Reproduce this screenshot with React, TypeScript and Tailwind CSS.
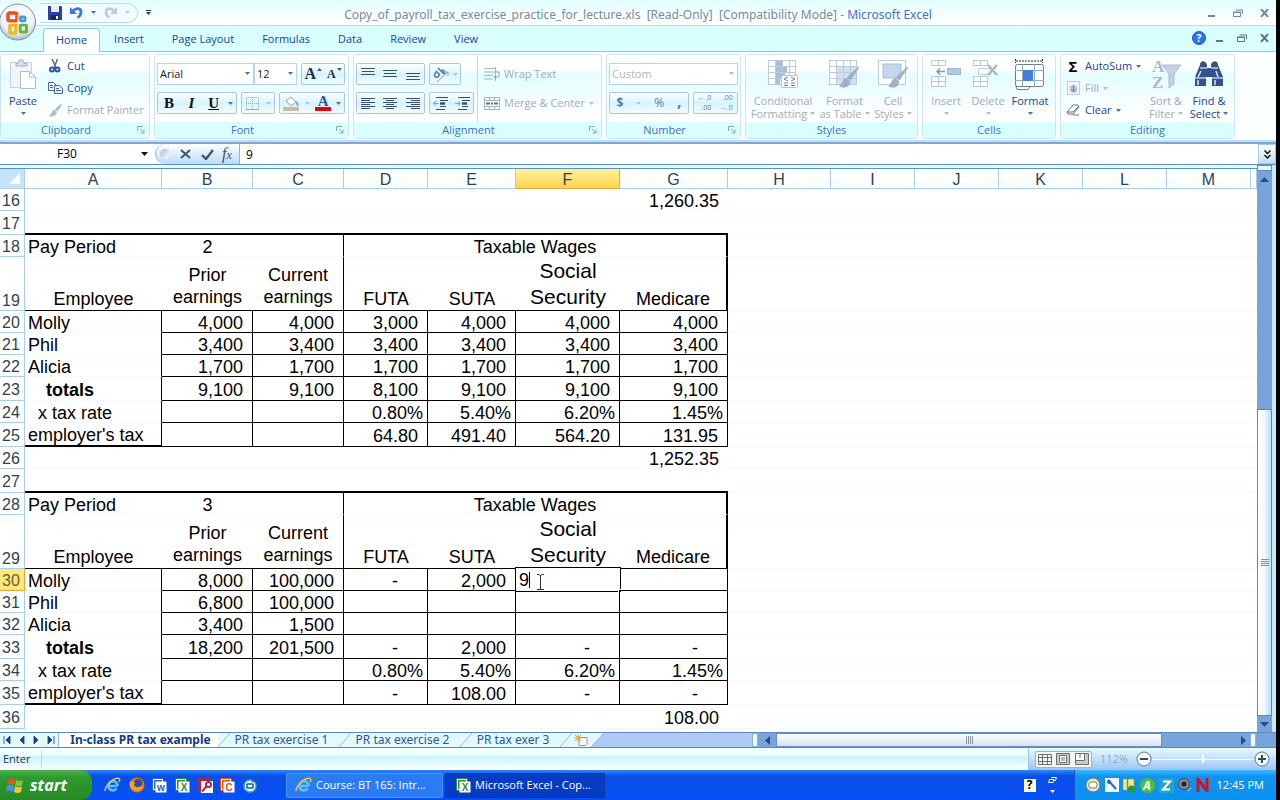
import React from 'react';
import clsx from 'clsx';

type IconProps = { className?: string };

function Caret({ className = 'text-[#4a6fa5]' }: IconProps) {
  return (
    <svg width="5" height="3" viewBox="0 0 5 3" className={clsx('shrink-0', className)}>
      <path d="M0 0h5L2.5 3z" fill="currentColor" />
    </svg>
  );
}

function Launcher() {
  return (
    <svg width="8" height="8" viewBox="0 0 8 8" fill="none" stroke="#8aa5c8">
      <path d="M.5 5V.5H6M3 3l3.500 3.500M7 3.500V7H3.500" />
    </svg>
  );
}

/* ---------- Title bar ---------- */

function OfficeLogo() {
  return (
    <svg width="38" height="40" viewBox="0 0 38 40">
      <defs>
        <radialGradient id="orb" cx="50%" cy="35%" r="65%">
          <stop offset="0" stopColor="#ffffff" />
          <stop offset="0.7" stopColor="#eef3fa" />
          <stop offset="1" stopColor="#a9b8cc" />
        </radialGradient>
      </defs>
      <circle cx="17.5" cy="20" r="18" fill="url(#orb)" stroke="#7f8fa8" />
      <g fill="none">
        <rect x="8" y="11" width="9" height="8" rx="2" stroke="#e8501d" strokeWidth="3.600" />
        <rect x="20.500" y="15" width="4.500" height="4" rx="1" stroke="#3d9be0" strokeWidth="2.800" />
        <rect x="10" y="23" width="6" height="8" rx="1" stroke="#f6b819" strokeWidth="3.600" />
        <rect x="20" y="23" width="6.500" height="7" rx="1.500" stroke="#6cb33e" strokeWidth="3.200" />
      </g>
      <path d="M18 12v20M8 21h20" stroke="#fff" strokeWidth=".8" />
    </svg>
  );
}

function SaveIcon() {
  return (
    <svg width="14" height="14" viewBox="0 0 14 14">
      <path d="M0 0h13l1 1v13H0z" fill="#2f3fa0" />
      <rect x="3" y="0" width="8" height="6" fill="#e6efff" />
      <rect x="3" y="9" width="8" height="5" fill="#1b2560" />
      <rect x="8" y="10" width="2" height="3" fill="#fff" />
    </svg>
  );
}

function UndoIcon({ flip }: { flip?: boolean }) {
  return (
    <svg width="13" height="13" viewBox="0 0 13 13" fill="none" className={flip ? '-scale-x-100' : ''}>
      <path d="M3 5C6 1.500 11 2 11 6c0 2.500-1.500 4.500-3.500 5.500" stroke={flip ? '#b9cde4' : '#3b78d8'} strokeWidth="2.800" />
      <path d="M0 1v7h7z" fill={flip ? '#b9cde4' : '#3b78d8'} />
    </svg>
  );
}

function WindowControls({ className }: { className: string }) {
  return (
    <div className={clsx('flex items-center', className)}>
      <button aria-label="Minimize" className="flex h-4 w-3 items-center justify-center">
        <svg width="8" height="8" viewBox="0 0 8 8"><path d="M0 7h7" stroke="currentColor" strokeWidth="2" /></svg>
      </button>
      <button aria-label="Restore" className="flex h-4 w-3 items-center justify-center">
        <svg width="10" height="8" viewBox="0 0 10 8" fill="none" stroke="currentColor">
          <path d="M2.500 1h7v4M.5 3.500h7v4h-7zM0 3h8" />
        </svg>
      </button>
      <button aria-label="Close" className="flex h-4 w-3 items-center justify-center">
        <svg width="9" height="8" viewBox="0 0 9 8"><path d="M1 0l7 8M8 0L1 8" stroke="currentColor" strokeWidth="2" /></svg>
      </button>
    </div>
  );
}

function TitleBar() {
  return (
    <header className="flex h-[26px] items-center border-b border-[#b9def0] bg-linear-to-b from-[#e0ffff] via-[#f4feff] to-white">
      <div className="flex h-6 w-40 items-center pl-10">
        <div className="flex h-5 w-[98px] items-center rounded-r-full border border-l-0 border-[#b8dcf0] bg-[#f2fdff] pl-2">
          <button aria-label="Save"><SaveIcon /></button>
          <button aria-label="Undo" className="ml-2 flex items-center gap-2">
            <UndoIcon />
            <Caret />
          </button>
          <button aria-label="Redo" className="ml-2 flex items-center gap-2">
            <UndoIcon flip />
            <Caret className="text-[#b9cde4]" />
          </button>
        </div>
        <button aria-label="Customize" className="ml-2 flex flex-col items-center gap-px">
          <span className="h-px w-[5px] bg-[#1f3a7a]" />
          <Caret className="text-[#1f3a7a]" />
        </button>
      </div>
      <h1 className="flex-1 pt-1 text-center font-['Noto_Sans',sans-serif] text-[12px] leading-5 whitespace-pre text-[#7a8aa0]">
        Copy_of_payroll_tax_exercise_practice_for_lecture.xls  [Read-Only]  [Compatibility Mode] -{' '}
        <span className="text-[#3c6fd0]">Microsoft Excel</span>
      </h1>
      <div className="flex w-40 justify-end pr-1.5">
        <WindowControls className="gap-3.5 text-[#6d88a8]" />
      </div>
    </header>
  );
}

const menuTabs = ['Insert', 'Page Layout', 'Formulas', 'Data', 'Review', 'View'];

function MenuTabs() {
  return (
    <nav className="flex h-[26px] items-end border-b border-[#9cc0e8] bg-[#d9ffff] pl-[43px] text-[11px] text-[#17439b]">
      <button className="-mb-px h-6 rounded-t-sm border border-b-0 border-[#9cc0e8] bg-linear-to-b from-[#f4ffff] to-white px-3">Home</button>
      {menuTabs.map((t) => (
        <button key={t} className="h-[23px] px-3.5">{t}</button>
      ))}
      <div className="ml-auto flex h-[26px] items-center gap-2 pr-1.5">
        <button aria-label="Help" className="flex size-[14px] items-center justify-center rounded-full border border-[#1a56c4] bg-[#2c72e8] text-[10px] font-bold text-white">?</button>
        <WindowControls className="gap-2.5 text-[#5f7288]" />
      </div>
    </nav>
  );
}

/* ---------- Ribbon ---------- */

function Group({ label, launcher, className, children }: { label: string; launcher?: boolean; className: string; children: React.ReactNode }) {
  return (
    <section className={clsx('flex h-[85px] shrink-0 flex-col overflow-hidden rounded-[3px] border border-[#c9e6f5] bg-linear-to-b from-white from-15% via-[#e4fdff] via-25% to-white to-75%', className)}>
      <div className="flex flex-1 px-0.5">{children}</div>
      <div className={clsx('relative flex h-4 items-center justify-center bg-[#d9ffff] text-[11px] text-[#3f6fc6]', launcher && 'pr-[18px]')}>
        {label}
        {launcher && (
          <button aria-label={label + ' options'} className="absolute right-1 bottom-1"><Launcher /></button>
        )}
      </div>
    </section>
  );
}

function SmallButton({ icon, label, disabled, caret }: { icon: React.ReactNode; label: string; disabled?: boolean; caret?: boolean }) {
  return (
    <button disabled={disabled} className={clsx('flex h-[22px] items-center gap-1 whitespace-nowrap', disabled ? 'text-[#a3abb3]' : 'text-[#17439b]')}>
      <span className="flex size-4 items-center justify-center">{icon}</span>
      {label}
      {caret && <Caret className={disabled ? 'text-[#b4bcc4]' : 'text-[#4a6fa5]'} />}
    </button>
  );
}

function BigButton({ icon, lines, disabled, className }: { icon: React.ReactNode; lines: string[]; disabled?: boolean; className: string }) {
  const caret = <Caret className={disabled ? 'text-[#b4bcc4]' : 'text-[#4a6fa5]'} />;
  return (
    <button disabled={disabled} className={clsx('flex flex-col items-center pt-[3px] leading-[13px] whitespace-nowrap', disabled ? 'text-[#a3abb3]' : 'text-[#17439b]', className)}>
      <span className="mb-1 flex h-8 items-center justify-center">{icon}</span>
      <span>{lines[0]}</span>
      <span className="flex h-[13px] items-center gap-[3px]">
        {lines[1]}
        {caret}
      </span>
    </button>
  );
}

function ButtonBox({ className, children }: { className?: string; children: React.ReactNode }) {
  return (
    <div className={clsx('flex h-[22px] items-center justify-around rounded-[2px] border border-[#a9c6e8] bg-linear-to-b from-white via-[#d8f4ff] to-[#f0fdff]', className)}>
      {children}
    </div>
  );
}

function Combo({ label, value, className, disabled }: { label: string; value: string; className: string; disabled?: boolean }) {
  return (
    <div className={clsx('relative h-[22px]', className)}>
      <select aria-label={label} disabled={disabled} className={clsx('h-full w-full appearance-none border border-[#b4d4ec] bg-white pl-0.5 opacity-100', disabled ? 'text-[#b9b6a4]' : 'text-[#222]')}>
        <option>{value}</option>
      </select>
      <span className="pointer-events-none absolute top-[9px] right-1 flex"><Caret className={disabled ? 'text-[#b4bcc4]' : 'text-[#4a6fa5]'} /></span>
    </div>
  );
}

function PasteIcon() {
  return (
    <svg width="28" height="31" viewBox="0 0 28 31" fill="none">
      <rect x="1.500" y="3.500" width="21" height="25" fill="#f0f5fa" stroke="#c3d3e2" />
      <path d="M7 4.500h2L10 1h4l1 3.500h3V7H7z" fill="#d7e1ec" stroke="#9fb2c8" />
      <path d="M11.500 12.500h9l6 5.500v11.500h-15z" fill="#fff" stroke="#a9bed4" />
      <path d="M20.500 12.500V18h6" stroke="#a9bed4" />
    </svg>
  );
}

function CutIcon() {
  return (
    <svg width="12" height="14" viewBox="0 0 12 14" fill="none">
      <path d="M3 0l4 9M8.500 0L5 9" stroke="#5d6f85" strokeWidth="1.600" />
      <circle cx="3" cy="10.500" r="2" stroke="#2555a8" strokeWidth="2" />
      <circle cx="8.500" cy="10.500" r="2" stroke="#2555a8" strokeWidth="2" />
    </svg>
  );
}

function CopyIcon() {
  return (
    <svg width="15" height="12" viewBox="0 0 15 12" stroke="#3f66ad">
      <path d="M.5.5h5l3 3v5h-8z" fill="#fff" />
      <path d="M6.500 3.500h5l3 3v5h-8z" fill="#eaf4ff" />
      <path d="M2 3.500h3M2 5.500h3M8 6.500h3M8 8.500h5" />
    </svg>
  );
}

function BrushIcon() {
  return (
    <svg width="13" height="13" viewBox="0 0 13 13">
      <path d="M12 0L6 5l2.500 2.500L13 1zM5.500 5.500C3 6 3 10 0 12c3 1.500 7 0 8-4z" fill="#a9bdd6" />
    </svg>
  );
}

function Lines({ widths, side = 'left' }: { widths: number[]; side?: 'left' | 'center' | 'right' }) {
  return (
    <svg width="14" height="12" viewBox="0 0 14 12">
      {widths.map((w, i) => (
        <rect key={i} x={side === 'right' ? 14 - w : side === 'center' ? (14 - w) / 2 : 0} y={i * 2 + 1} width={w} height="1" fill="#3a4f70" />
      ))}
    </svg>
  );
}

function VLines({ offset }: { offset: number }) {
  return (
    <svg width="14" height="14" viewBox="0 0 14 14" stroke="#3a4f70">
      {[0, 1, 2].map((i) => (
        <path key={i} d={`M${i === 1 ? 1 : 0} ${offset + i * 3 + 0.5}h${i === 1 ? 12 : 14}`} />
      ))}
    </svg>
  );
}

function IndentIcon({ right }: { right?: boolean }) {
  return (
    <svg width="15" height="13" viewBox="0 0 15 13" stroke="#3a4f70">
      <path d="M3 .5h12M7 3.500h8M7 9.500h6M3 12.500h9" />
      <path d="M7 6.500h5" strokeWidth="2.500" />
      <path d={right ? 'M0 6.500h5M3 4l2.500 2.500L3 9' : 'M5.500 6.500h-5M3 4L.5 6.500 3 9'} fill="none" stroke="#7ba0d0" />
    </svg>
  );
}

function GridIcon({ variant }: { variant: 'cond' | 'table' | 'cell' }) {
  return (
    <svg width="31" height="30" viewBox="0 0 31 30" fill="none">
      <rect x=".5" y="1.500" width="27" height="24" fill="#fff" stroke="#bccbdc" />
      {variant === 'cond' && <path d="M8 2h6v5H8zM8 7h11v6H8zM8 13h9v6H8zM8 19h4v6H8z" fill="#a9bedd" />}
      {variant === 'table' && <path d="M7 8h20v17H7z" fill="#d3e0f4" />}
      {variant === 'cell' && <path d="M5 5h18v14H5z" fill="#c4d6f0" stroke="#a9bdd8" />}
      {variant !== 'cell' && <path d="M0 7.500h28M0 13.500h28M0 19.500h28M7.500 1v25M14.500 1v25M21.500 1v25" stroke="#bccbdc" />}
      {variant === 'cond' ? (
        <>
          <rect x="13.500" y="16.500" width="16" height="12" rx="1" fill="#fff" stroke="#b3c2d4" />
          <path d="M20 18l-4 2 4 2M16 24h4M23 18l4 2-4 2M23 24h4M23 26.500h4M16 26.500h4" stroke="#6f8097" />
        </>
      ) : (
        <path d="M30 7L18 18l3 4 9-13zM18 19c-5 0-4 6-8 8 4 3 11 2 11-4z" fill="#9fb0c8" />
      )}
    </svg>
  );
}

function CellsIcon({ variant }: { variant: 'insert' | 'delete' }) {
  return (
    <svg width="31" height="30" viewBox="0 0 31 30" fill="none" stroke="#b9c8d8">
      <path d="M.5 1.500h14v5H.5zM.5 17.500h14v10H.5zM7.500 1.500v5M7.500 17.500v10M.5 22.500h14" fill="#fff" />
      {variant === 'insert' ? (
        <>
          <path d="M16.500 9.500h13v6h-13zM23 9.500v6" fill="#b5c9e6" stroke="#9fb4cf" />
          <path d="M14 12.500H6M9 9.500l-3 3 3 3" stroke="#8598b4" strokeWidth="1.500" />
        </>
      ) : (
        <>
          <path d="M5.500 9.500h12v6h-12z" strokeDasharray="1 1" stroke="#8fa3bd" />
          <path d="M15 6l9 10M24 6l-9 10" stroke="#aab9cc" strokeWidth="2.500" />
        </>
      )}
    </svg>
  );
}

function FormatIcon() {
  return (
    <svg width="32" height="31" viewBox="0 0 32 31" fill="none">
      <path d="M1.500 0v4M28.500 0v4M2 2h26" stroke="#222c44" strokeDasharray="2 1" />
      <rect x="1.500" y="5.500" width="28" height="22" rx="2" fill="#fff" stroke="#6b7c94" />
      <path d="M1 11.500h29M1 21.500h29M8.500 5v23M20.500 5v23" stroke="#9aa8bc" />
      <rect x="9" y="11" width="10" height="11" fill="#3f7fe0" />
      <path d="M2 27.500h14l-2 3H3z" fill="#fff" stroke="#6b7c94" />
    </svg>
  );
}

function SortIcon() {
  return (
    <svg width="31" height="31" viewBox="0 0 31 31" fontFamily="Liberation Serif, serif" fontSize="17" fill="#a9b8cc">
      <text x="1" y="13" fontWeight="bold">A</text>
      <text x="1" y="29" fontWeight="bold">Z</text>
      <path d="M11 6h19l-7 9v10l-5 4V15z" fill="#c3d2e6" stroke="#a9bbd2" />
    </svg>
  );
}

function BinocularsIcon() {
  return (
    <svg width="30" height="28" viewBox="0 0 30 28">
      <path d="M6 5c0-5 6-5 7 0v3h4V5c1-5 7-5 7 0l5 12v9H18v-9h-6v9H1v-9z" fill="#34538c" />
      <path d="M1 18h11M18 18h11M6 8h7M17 8h7" stroke="#b5cdee" strokeWidth="1.500" />
      <path d="M7 11l-3 6M22 11l2 6M4 20v5M21 20v5" stroke="#d8e6fa" strokeWidth="1.500" />
    </svg>
  );
}

function WrapIcon() {
  return (
    <svg width="16" height="15" viewBox="0 0 16 15" fill="none" stroke="#a9b4c0">
      <path d="M0 1.500h11M0 5h11M0 8.500h9M0 12h9M11.500 0v14" />
      <path d="M12 5h3v5h-5M12 8l-2 2 2 2" stroke="#8fa4bf" />
    </svg>
  );
}

function MergeIcon() {
  return (
    <svg width="16" height="13" viewBox="0 0 16 13" fill="none" stroke="#a9b4c0">
      <path d="M.5.5h15v12H.5zM.5 3.500h15M.5 9.500h15M5.500.5v3M10.500.5v3M5.500 9.500v3M10.500 9.500v3" />
      <path d="M2 6.500h4M10 6.500h4M7 6.500h2" stroke="#5f7088" strokeWidth="2" />
    </svg>
  );
}

function Ribbon() {
  return (
    <div className="flex h-[90px] gap-1 overflow-hidden border-b-2 border-[#c2dcf4] bg-[#fbffff] pt-0.5 text-[11px]">
      <Group label="Clipboard" launcher className="w-[150px]">
        <BigButton icon={<PasteIcon />} lines={['Paste', '']} className="w-10" />
        <div className="ml-1 flex flex-col">
          <SmallButton icon={<CutIcon />} label="Cut" />
          <SmallButton icon={<CopyIcon />} label="Copy" />
          <SmallButton icon={<BrushIcon />} label="Format Painter" disabled />
        </div>
      </Group>

      <Group label="Font" launcher className="w-[195px]">
        <div className="flex w-full flex-col gap-[7px] pt-2">
          <div className="flex">
            <Combo label="Font name" value="Arial" className="w-[97px]" />
            <Combo label="Font size" value="12" className="w-[43px]" />
            <ButtonBox className="ml-1 w-11 font-['Liberation_Serif',serif] font-bold text-[#1d2a44]">
              <button aria-label="Grow font" className="flex items-start gap-px text-[16px] leading-5">
                A
                <svg width="5" height="3" viewBox="0 0 5 3" className="mt-1"><path d="M0 3h5L2.500 0z" fill="#3a5c9c" /></svg>
              </button>
              <button aria-label="Shrink font" className="flex items-start gap-px text-[12px] leading-5">
                A
                <svg width="5" height="3" viewBox="0 0 5 3" className="mt-1"><path d="M0 0h5L2.500 3z" fill="#3a5c9c" /></svg>
              </button>
            </ButtonBox>
          </div>
          <div className="flex gap-1">
            <ButtonBox className="w-20 font-['Liberation_Serif',serif] text-[15px] font-bold text-[#111]">
              <button aria-label="Bold" className="w-4">B</button>
              <button aria-label="Italic" className="w-4 italic">I</button>
              <button aria-label="Underline" className="w-4 underline">U</button>
              <Caret />
            </ButtonBox>
            <ButtonBox className="w-[34px]">
              <button aria-label="Borders" className="flex">
                <svg width="13" height="13" viewBox="0 0 13 13" fill="none" stroke="#8fa8c8">
                  <path d="M.5.5h12v12H.5zM6.500 0v13M0 6.500h13" strokeDasharray="1 1" />
                  <path d="M0 12.500h13" />
                </svg>
              </button>
              <Caret className="text-[#b4c4d8]" />
            </ButtonBox>
            <ButtonBox className="w-[66px]">
              <button aria-label="Fill color" className="flex">
                <svg width="17" height="16" viewBox="0 0 17 16" fill="none">
                  <path d="M3 6l5-4 5 5-5 4z" fill="#fff" stroke="#8aa3c5" />
                  <path d="M13 7c2 1 2 3 1 4" stroke="#8aa3c5" strokeWidth="2" />
                  <rect x="0" y="12" width="16" height="4" fill="#c4bfa4" />
                </svg>
              </button>
              <Caret className="text-[#b4c4d8]" />
              <button aria-label="Font color" className="flex flex-col items-center font-['Liberation_Serif',serif] text-[15px] leading-3 font-bold text-[#2a56a8]">
                A<span className="h-1 w-4 bg-[#e3000f]" />
              </button>
              <Caret />
            </ButtonBox>
          </div>
        </div>
      </Group>

      <Group label="Alignment" launcher className="w-[249px]">
        <div className="flex w-[122px] flex-col gap-[7px] border-r border-[#c3d9ea] pt-2">
          <div className="flex gap-1">
            <ButtonBox className="w-[69px]">
              <button aria-label="Top align"><VLines offset={1} /></button>
              <button aria-label="Middle align"><VLines offset={3} /></button>
              <button aria-label="Bottom align"><VLines offset={6} /></button>
            </ButtonBox>
            <ButtonBox className="w-8">
              <button aria-label="Orientation">
                <svg width="18" height="18" viewBox="0 0 18 18" fill="none">
                  <path d="M2.500 9.500l2-3 3 3-1.500 2.500c-2 1-4-.5-3.500-2.500zM6 3l6 6M9 6c2-2 5 1 3 3" stroke="#5f7796" strokeWidth="1.500" />
                  <path d="M5 17L16 7M12.500 7H16v3.500" stroke="#8aa3c5" />
                </svg>
              </button>
              <Caret className="text-[#b4c4d8]" />
            </ButtonBox>
          </div>
          <div className="flex gap-1">
            <ButtonBox className="w-[69px]">
              <button aria-label="Align left"><Lines widths={[14, 9, 14, 9, 14, 9]} /></button>
              <button aria-label="Center"><Lines widths={[14, 8, 14, 8, 14, 8]} side="center" /></button>
              <button aria-label="Align right"><Lines widths={[14, 9, 14, 9, 14, 9]} side="right" /></button>
            </ButtonBox>
            <ButtonBox className="w-[45px]">
              <button aria-label="Decrease indent"><IndentIcon /></button>
              <button aria-label="Increase indent"><IndentIcon right /></button>
            </ButtonBox>
          </div>
        </div>
        <div className="flex flex-col gap-[7px] pt-2 pl-1.5">
          <SmallButton icon={<WrapIcon />} label="Wrap Text" disabled />
          <SmallButton icon={<MergeIcon />} label="Merge & Center" disabled caret />
        </div>
      </Group>

      <Group label="Number" launcher className="w-[135px]">
        <div className="flex w-full flex-col gap-[7px] pt-2">
          <Combo label="Number format" value="Custom" disabled className="w-full" />
          <div className="flex gap-1">
            <ButtonBox className="w-20 text-[12px] text-[#5c7ca8]">
              <button className="font-bold">$</button>
              <Caret className="text-[#b4c4d8]" />
              <button>%</button>
              <button className="pb-1 text-[16px] font-bold">,</button>
            </ButtonBox>
            <ButtonBox className="flex-1 text-[7px] leading-[10px] text-[#5c7ca8]">
              <button aria-label="Increase decimal" className="flex flex-col items-end">
                <span>←.0</span>
                <span>.00</span>
              </button>
              <button aria-label="Decrease decimal" className="flex flex-col items-end">
                <span>.00</span>
                <span>→.0</span>
              </button>
            </ButtonBox>
          </div>
        </div>
      </Group>

      <Group label="Styles" className="w-[173px]">
        <BigButton icon={<GridIcon variant="cond" />} lines={['Conditional', 'Formatting']} disabled className="w-[70px]" />
        <BigButton icon={<GridIcon variant="table" />} lines={['Format', 'as Table']} disabled className="w-[53px]" />
        <BigButton icon={<GridIcon variant="cell" />} lines={['Cell', 'Styles']} disabled className="w-[44px]" />
      </Group>

      <Group label="Cells" className="w-[134px]">
        <BigButton icon={<CellsIcon variant="insert" />} lines={['Insert', '']} disabled className="w-[42px]" />
        <BigButton icon={<CellsIcon variant="delete" />} lines={['Delete', '']} disabled className="w-[42px]" />
        <BigButton icon={<FormatIcon />} lines={['Format', '']} className="w-[42px]" />
      </Group>

      <Group label="Editing" className="w-[175px]">
        <div className="flex w-[82px] flex-col pl-0.5">
          <SmallButton icon={<span className="text-[15px] font-bold text-black">Σ</span>} label="AutoSum" caret />
          <SmallButton
            icon={
              <svg width="13" height="14" viewBox="0 0 13 14" fill="none">
                <rect x=".5" y=".5" width="12" height="13" fill="#f4f8fc" stroke="#c3ced9" />
                <circle cx="6.500" cy="8" r="4" fill="#b9c9dd" />
                <path d="M6.500 4v6M4 8l2.500 2.500L9 8" stroke="#74879f" />
              </svg>
            }
            label="Fill"
            disabled
            caret
          />
          <SmallButton
            icon={
              <svg width="14" height="12" viewBox="0 0 14 12">
                <path d="M1 8l6-7h5l1 2-6 7H2z" fill="#fff" stroke="#64748c" />
                <path d="M1 8h6l6-6M7 11h6" fill="none" stroke="#64748c" />
              </svg>
            }
            label="Clear"
            caret
          />
        </div>
        <BigButton icon={<SortIcon />} lines={['Sort &', 'Filter']} disabled className="w-[42px]" />
        <BigButton icon={<BinocularsIcon />} lines={['Find &', 'Select']} className="w-[44px]" />
      </Group>
    </div>
  );
}

/* ---------- Formula bar ---------- */

function FormulaBar() {
  return (
    <div className="border-t-2 border-b border-[#5d90c4] border-t-[#7ba7d6] bg-[#e6faff]">
      <div className="flex h-5 items-center bg-white text-[12px]">
        <div className="flex h-full w-[155px] items-center">
          <input aria-label="Name box" defaultValue="F30" className="w-[134px] bg-transparent text-center text-black outline-none" />
          <button aria-label="Names" className="flex w-5 justify-center">
            <svg width="7" height="4" viewBox="0 0 7 4"><path d="M0 0h7L3.500 4z" fill="#111" /></svg>
          </button>
        </div>
        <div className="flex h-full w-[85px] items-center rounded-l-full border-r border-l border-[#8fb2dc] bg-linear-to-b from-white to-[#b9dcfa] pl-1">
          <span className="size-2.5 rounded-full bg-linear-to-br from-[#a9bcd4] to-white" />
          <button aria-label="Cancel" className="ml-2.5">
            <svg width="11" height="10" viewBox="0 0 11 10"><path d="M1 1l9 8M10 1L1 9" stroke="#4a5463" strokeWidth="2" /></svg>
          </button>
          <button aria-label="Accept" className="ml-2.5">
            <svg width="13" height="11" viewBox="0 0 13 11" fill="none"><path d="M1 6l4 4 7-9" stroke="#4a5463" strokeWidth="2.400" /></svg>
          </button>
          <button aria-label="Insert function" className="ml-2 font-['Liberation_Serif',serif] text-[16px] leading-4 text-[#3c5070] italic">f<span className="text-[12px]">x</span></button>
        </div>
        <input aria-label="Formula" defaultValue="9" className="h-full min-w-0 flex-1 bg-transparent pl-1.5 text-black outline-none" />
        <button aria-label="Expand formula bar" className="flex h-full w-[18px] items-center justify-center border border-[#a9cbe8] bg-linear-to-b from-white to-[#bfe0f8]">
          <svg width="7" height="9" viewBox="0 0 7 9" fill="none" stroke="#111" strokeWidth="1.500"><path d="M.5.500l3 3 3-3M.5 5l3 3 3-3" /></svg>
        </button>
      </div>
    </div>
  );
}

/* ---------- Sheet ---------- */

type Kind = 'plain' | 'gap' | 'title' | 'head' | 'body' | 'last';
interface Row {
  n: number;
  kind: Kind;
  height: string;
  cells: string[];
}

const H22 = 'h-[22px]';
const H24 = 'h-6';
const heads = ['Employee', 'Prior\nearnings', 'Current\nearnings', 'FUTA', 'SUTA', 'Social\nSecurity', 'Medicare'];
const empty = ['', '', '', '', '', '', ''];

const rows: Row[] = [
  { n: 16, kind: 'plain', height: H22, cells: ['', '', '', '', '', '', '1,260.35'] },
  { n: 17, kind: 'gap', height: H24, cells: empty },
  { n: 18, kind: 'title', height: H22, cells: ['Pay Period', '2', '', 'Taxable Wages'] },
  { n: 19, kind: 'head', height: 'h-[54px]', cells: heads },
  { n: 20, kind: 'body', height: H22, cells: ['Molly', '4,000', '4,000', '3,000', '4,000', '4,000', '4,000'] },
  { n: 21, kind: 'body', height: H22, cells: ['Phil', '3,400', '3,400', '3,400', '3,400', '3,400', '3,400'] },
  { n: 22, kind: 'body', height: H22, cells: ['Alicia', '1,700', '1,700', '1,700', '1,700', '1,700', '1,700'] },
  { n: 23, kind: 'body', height: H24, cells: ['totals', '9,100', '9,100', '8,100', '9,100', '9,100', '9,100'] },
  { n: 24, kind: 'body', height: H22, cells: ['x tax rate', '', '', '0.80%', '5.40%', '6.20%', '1.45%'] },
  { n: 25, kind: 'last', height: H24, cells: ["employer's tax", '', '', '64.80', '491.40', '564.20', '131.95'] },
  { n: 26, kind: 'plain', height: H22, cells: ['', '', '', '', '', '', '1,252.35'] },
  { n: 27, kind: 'gap', height: H24, cells: empty },
  { n: 28, kind: 'title', height: H22, cells: ['Pay Period', '3', '', 'Taxable Wages'] },
  { n: 29, kind: 'head', height: 'h-[54px]', cells: heads },
  { n: 30, kind: 'body', height: H22, cells: ['Molly', '8,000', '100,000', '-', '2,000', 'edit', ''] },
  { n: 31, kind: 'body', height: H22, cells: ['Phil', '6,800', '100,000', '', '', '', ''] },
  { n: 32, kind: 'body', height: H22, cells: ['Alicia', '3,400', '1,500', '', '', '', ''] },
  { n: 33, kind: 'body', height: H24, cells: ['totals', '18,200', '201,500', '-', '2,000', '-', '-'] },
  { n: 34, kind: 'body', height: H22, cells: ['x tax rate', '', '', '0.80%', '5.40%', '6.20%', '1.45%'] },
  { n: 35, kind: 'last', height: H24, cells: ["employer's tax", '', '', '-', '108.00', '-', '-'] },
  { n: 36, kind: 'plain', height: H24, cells: ['', '', '', '', '', '', '108.00'] },
];

const columns = [
  { name: 'A', width: 'w-[137px]' },
  { name: 'B', width: 'w-[91px]' },
  { name: 'C', width: 'w-[91px]' },
  { name: 'D', width: 'w-[84px]' },
  { name: 'E', width: 'w-[88px]' },
  { name: 'F', width: 'w-[104px]' },
  { name: 'G', width: 'w-[108px]' },
  { name: 'H', width: 'w-[103px]' },
  { name: 'I', width: 'w-[84px]' },
  { name: 'J', width: 'w-[84px]' },
  { name: 'K', width: 'w-[84px]' },
  { name: 'L', width: 'w-[84px]' },
  { name: 'M', width: 'w-[84px]' },
  { name: '', width: '' },
];

function borders(kind: Kind, col: number) {
  const pale = 'border-b border-b-[#f3fafc]';
  if (kind === 'plain') return pale;
  if (kind === 'gap') return 'border-b-2 border-b-black';
  if (kind === 'title' || kind === 'head') {
    return clsx(
      kind === 'head' ? 'border-b border-b-black' : pale,
      col === 2 && 'border-r border-r-black',
      col === 6 && 'border-r-2 border-r-black',
    );
  }
  if (col === 0) return clsx('border-r border-r-black', kind === 'last' ? 'border-b-2 border-b-black' : pale);
  return 'border-r border-b border-black';
}

function align(kind: Kind, col: number, text: string) {
  if (kind === 'head') {
    return clsx(
      'text-center align-bottom whitespace-pre',
      col === 5 ? 'text-[21px] leading-[26px]' : 'leading-[22px]',
      (col === 1 || col === 2) && 'pb-0.5',
    );
  }
  if (kind === 'title') return col === 0 ? 'pt-0.5 pl-[3px]' : 'pt-0.5 text-center';
  if (col === 0) {
    if (text === 'totals') return 'pt-0.5 pl-[21px] font-bold';
    if (text === 'x tax rate') return 'pt-0.5 pl-[13px]';
    return 'pt-0.5 pl-[3px]';
  }
  if (text === '-') return 'pt-0.5 pr-[29px] text-right';
  return text.endsWith('%') ? 'pt-0.5 pr-1 text-right' : 'pt-0.5 pr-[9px] text-right';
}

function ActiveCell() {
  return (
    <div className="absolute -top-0.5 -right-0.5 -bottom-0.5 -left-px border border-black bg-white">
      <input aria-label="F30" defaultValue="9" className="block h-full w-full bg-transparent pt-0.5 pl-[3px] outline-none" />
      <span className="absolute top-1 left-[13px] h-4 w-px bg-black" />
      <span className="absolute -right-0.5 -bottom-0.5 size-1 border border-white bg-black" />
      <svg width="7" height="16" viewBox="0 0 7 16" className="absolute top-1.5 left-[21px]" fill="none" stroke="#333">
        <path d="M0 .5h2l1.500 1 1.500-1h2M3.500 1v14M0 15.500h7" />
      </svg>
    </div>
  );
}

function Sheet() {
  return (
    <table className="w-full table-fixed border-separate border-spacing-0 bg-white font-['Liberation_Sans',Arial,sans-serif] text-[18px] leading-[18px] text-black">
      <colgroup>
        <col className="w-[25px]" />
        {columns.map((c, i) => (
          <col key={i} className={c.width} />
        ))}
      </colgroup>
      <thead>
        <tr className="h-5 text-[16px] leading-[17px] text-[#2c4450]">
          <th className="border-r border-b border-[#a9cfe8] bg-[#c5e4fc] p-0">
            <svg width="12" height="11" viewBox="0 0 12 11" className="ml-2 block"><path d="M12 0v11H1z" fill="#fff" /></svg>
          </th>
          {columns.map((c, i) => (
            <th
              key={i}
              className={clsx(
                'border-r border-b p-0 pt-0.5 text-center font-normal',
                c.name === 'F' ? 'border-[#eda53c] bg-linear-to-b from-[#fff09a] to-[#ffd64a]' : 'border-[#a9cfe8] bg-[#fcffff]',
              )}
            >
              {c.name}
            </th>
          ))}
        </tr>
      </thead>
      <tbody>
        {rows.map((r) => (
          <tr key={r.n} className={r.height}>
            <th
              className={clsx(
                'border-r border-b p-0 pt-[3px] pl-0.5 text-left text-[16px] font-normal',
                r.kind === 'head' ? 'align-bottom' : 'align-middle',
                r.n === 30 ? 'border-[#eda53c] bg-[#ffe97c] text-[#6a5c28]' : 'border-[#a9cfe8] text-[#2c4450]',
              )}
            >
              {r.n}
            </th>
            {r.cells.map((text, i) => (
              <td
                key={i}
                colSpan={r.kind === 'title' && i === 3 ? 4 : undefined}
                className={clsx('relative whitespace-nowrap', borders(r.kind, r.kind === 'title' && i === 3 ? 6 : i), align(r.kind, i, text))}
              >
                {text === 'edit' ? <ActiveCell /> : text}
              </td>
            ))}
            <td colSpan={7} className="border-b border-b-[#f3fafc]" />
          </tr>
        ))}
      </tbody>
    </table>
  );
}

function VerticalScroll() {
  return (
    <div className="flex w-[15px] shrink-0 flex-col items-center bg-[#78a4dc]">
      <div className="h-1.5 w-full border border-[#5f8fc8] bg-[#e8f6ff]" />
      <button aria-label="Scroll up" className="flex h-4 w-full items-center justify-center">
        <svg width="9" height="5" viewBox="0 0 9 5"><path d="M0 5h9L4.500 0z" fill="#2b4a80" /></svg>
      </button>
      <div className="flex w-full flex-1 flex-col">
        <div className="h-[42%]" />
        <div className="flex flex-1 flex-col items-center justify-center gap-px border border-[#5f86b8] bg-linear-to-r from-white via-[#eefaff] to-[#b9dcf8]">
          {[0, 1, 2, 3].map((i) => (
            <span key={i} className="h-px w-2 bg-[#7f90a0]" />
          ))}
        </div>
      </div>
      <button aria-label="Scroll down" className="flex h-4 w-full items-center justify-center">
        <svg width="9" height="5" viewBox="0 0 9 5"><path d="M0 0h9L4.500 5z" fill="#2b4a80" /></svg>
      </button>
    </div>
  );
}

/* ---------- Sheet tabs, status bar ---------- */

function Slash() {
  return (
    <svg width="14" height="14" viewBox="0 0 14 14" className="shrink-0">
      <path d="M0 14L12 0" stroke="#9ab8d8" />
    </svg>
  );
}

function SheetTabs() {
  return (
    <div className="flex h-4 border-y border-[#5c86c0] bg-[#aecbf4] font-['Noto_Sans',sans-serif] text-[12px] leading-3 text-[#2a5694]">
      <div className="flex w-[752px] shrink-0">
        <div className="flex w-[59px] items-center justify-around border-r border-[#9ab8d8] bg-[#e2faff] text-[#173f8a]">
          {['M1 0v8M7 0L3 4l4 4z', 'M6 0L2 4l4 4z', 'M2 0l4 4-4 4z', 'M1 0l4 4-4 4zM7 0v8'].map((d) => (
            <button key={d} aria-label="Scroll tabs">
              <svg width="8" height="8" viewBox="0 0 8 8" fill="currentColor" stroke="currentColor" strokeWidth=".8"><path d={d} /></svg>
            </button>
          ))}
        </div>
        <div className="flex items-center bg-[#e2faff] whitespace-nowrap">
          <button className="h-full w-[159px] bg-white pl-1 text-center font-bold text-[#143a80]">In-class PR tax example</button>
          <Slash />
          <button className="w-[107px] pr-2">PR tax exercise 1</button>
          <Slash />
          <button className="w-[107px] pr-2">PR tax exercise 2</button>
          <Slash />
          <button className="w-[86px] pr-2">PR tax exer 3</button>
          <Slash />
          <button aria-label="New sheet">
            <svg width="14" height="13" viewBox="0 0 14 13">
              <path d="M5 3.500h8v6l-2 2H5z" fill="#fff" stroke="#7f97b8" />
              <path d="M4 0v8M0 4h8M1 1l6 6M7 1L1 7" stroke="#f0a020" />
            </svg>
          </button>
        </div>
        <svg width="16" height="14" viewBox="0 0 16 14"><path d="M0 0h16L3 14H0z" fill="#e2faff" /><path d="M16 0L3 14" stroke="#9ab8d8" /></svg>
      </div>
      <div className="flex min-w-0 flex-1 bg-[#78a4dc]">
        <span className="w-1.5 border border-[#8fb0d8] bg-[#eaf8ff]" />
        <button aria-label="Scroll left" className="flex w-[18px] items-center justify-center">
          <svg width="5" height="9" viewBox="0 0 5 9"><path d="M5 0v9L0 4.500z" fill="#2b4a80" /></svg>
        </button>
        <div className="flex-1">
          <div className="flex h-full w-[84%] items-center justify-center gap-px border border-[#6c8fc0] bg-linear-to-b from-white to-[#d4e2ee]">
            {[0, 1, 2, 3].map((i) => (
              <span key={i} className="h-2 w-px bg-[#8a96a4]" />
            ))}
          </div>
        </div>
        <button aria-label="Scroll right" className="flex w-[14px] items-center justify-center">
          <svg width="5" height="9" viewBox="0 0 5 9"><path d="M0 0v9l5-4.500z" fill="#2b4a80" /></svg>
        </button>
        <span className="w-1.5 border border-[#8fb0d8] bg-[#eaf8ff]" />
        <span className="w-5" />
      </div>
    </div>
  );
}

function ZoomButton({ plus }: { plus?: boolean }) {
  return (
    <button aria-label={plus ? 'Zoom in' : 'Zoom out'} className="shrink-0">
      <svg width="16" height="16" viewBox="0 0 16 16">
        <circle cx="8" cy="8" r="7" fill="#f4fbff" stroke="#5c7696" />
        <path d={plus ? 'M4 8h8M8 4v8' : 'M4 8h8'} stroke="#3a4a60" strokeWidth="2" />
      </svg>
    </button>
  );
}

function StatusBar() {
  return (
    <div className="flex h-[22px] items-center bg-linear-to-b from-[#f0ffff] from-30% via-[#c9f4fb] via-40% to-white text-[11px]">
      <span className="w-[42px] border-r border-[#b4d4e4] pl-[3px] leading-4 text-[#1f2f5c]">Enter</span>
      <div className="ml-auto flex h-full items-center border-l border-[#a4c4e0] bg-linear-to-b from-[#e8faff] to-[#9cc4f4] pr-1.5 pl-1.5">
        <div className="flex h-[17px] w-[57px] items-center justify-around rounded-[2px] border border-[#9ab4d0] bg-[#f4f7f4]">
          <button aria-label="Normal view">
            <svg width="14" height="11" viewBox="0 0 14 11" fill="none" stroke="#6a6f70"><path d="M.5.5h13v10H.5zM0 3.500h14M0 7.500h14M4.500 0v11M9.500 0v11" /></svg>
          </button>
          <button aria-label="Page layout view">
            <svg width="14" height="12" viewBox="0 0 14 12" fill="none" stroke="#6a6f70"><path d="M.5.5h13v11H.5z" fill="#c9ccc8" /><path d="M3.500 2.500h7v7h-7zM5 5h4M5 7h4" fill="#fff" /></svg>
          </button>
          <button aria-label="Page break view">
            <svg width="14" height="12" viewBox="0 0 14 12" fill="none" stroke="#6a6f70"><path d="M.5.5h13v11H.5z" fill="#c9ccc8" /><path d="M.5.5h9v7h-9zM5 0v5" fill="#fff" /></svg>
          </button>
        </div>
        <span className="w-[44px] text-center text-[#93a9c4]">112%</span>
        <ZoomButton />
        <input
          type="range"
          aria-label="Zoom"
          defaultValue={50}
          className="h-px w-[102px] appearance-none bg-[#f2fbff] [&::-webkit-slider-thumb]:h-2 [&::-webkit-slider-thumb]:w-0.5 [&::-webkit-slider-thumb]:appearance-none [&::-webkit-slider-thumb]:bg-white"
        />
        <ZoomButton plus />
      </div>
    </div>
  );
}

/* ---------- Taskbar ---------- */

function IeIcon() {
  return (
    <svg width="17" height="16" viewBox="0 0 17 16" fill="none">
      <path d="M13.500 9H4.500c0 5 6 5.500 8 2.500M4.500 9c0-6.500 9-6.500 9 0" stroke="#5cc0f8" strokeWidth="2.600" />
      <path d="M1 14C1 9 10 0 15 1.500c1 .5 1 2 0 3.500" stroke="#f2c43c" strokeWidth="1.400" />
    </svg>
  );
}

function DocIcon({ letter, color }: { letter: string; color: string }) {
  return (
    <svg width="15" height="15" viewBox="0 0 15 15">
      <rect x="0" y="0" width="12" height="13" rx="1" fill={color} />
      <rect x="1.500" y="1.500" width="9" height="10" fill="none" stroke="#fff" />
      <rect x="3.500" y="3.500" width="11" height="11" fill="#fff" />
      <text x="9" y="13" textAnchor="middle" fontSize="10" fontWeight="bold" fill={color} fontFamily="Liberation Sans, sans-serif">{letter}</text>
    </svg>
  );
}

function AccessIcon() {
  return (
    <svg width="15" height="15" viewBox="0 0 15 15" fill="none">
      <rect x="0" y="0" width="12" height="13" rx="1" fill="#a82848" />
      <rect x="3" y="3" width="12" height="12" fill="#fff" />
      <circle cx="10.500" cy="6.500" r="2.500" stroke="#a82848" strokeWidth="2" />
      <path d="M9 8l-5 5.500" stroke="#a82848" strokeWidth="2" />
    </svg>
  );
}

function FirefoxIcon() {
  return (
    <svg width="16" height="16" viewBox="0 0 16 16" fill="none">
      <circle cx="8" cy="8" r="7.500" fill="#e8731a" />
      <circle cx="9" cy="6" r="4" fill="#2b4f9c" />
      <path d="M1 4c1 1 4 0 5 2 0 1-2 1-1 3 2 3 6 2 9-1 0 5-5 7-9 5S0 8 1 4z" fill="#f8a028" />
    </svg>
  );
}

function GlobeIcon() {
  return (
    <svg width="15" height="16" viewBox="0 0 15 16" fill="none">
      <circle cx="7" cy="9" r="6" fill="#e8f6ff" stroke="#4aa8c8" strokeWidth="1.500" />
      <path d="M4 7h6M4 11h6M4 7v4M9 5l5-4M10 7v4" stroke="#1c5ca0" strokeWidth="1.500" />
    </svg>
  );
}

function Taskbar() {
  return (
    <footer className="flex h-[30px] items-center bg-linear-to-b from-[#2f86f8] via-[#0a4ee8] via-20% to-[#0550f6] text-[11px] text-white">
      <button className="flex h-full w-[92px] items-center gap-1.5 rounded-r-xl bg-linear-to-b from-[#4cb04c] via-[#2d9a2d] via-25% to-[#268a26] pl-1.5">
        <svg width="18" height="17" viewBox="0 0 18 17">
          <path d="M2 3c2-2 4-2 7-.5L8 8C5 6.500 3 7 1 8z" fill="#e8501d" />
          <path d="M10 3c3 1.500 5 1 7 0l-1 5.500c-3 1.500-5 1-7 0z" fill="#7cc83c" />
          <path d="M1 9c2-1 4-1.500 7 0l-1 5.500C4 13 2 13.500 0 14.500z" fill="#4a90f0" />
          <path d="M9 9.500c3 1 5 1 7 0L15 15c-3 1.500-5 1-7 0z" fill="#f8c830" />
        </svg>
        <span className="text-[16px] leading-5 font-bold italic">start</span>
      </button>
      <div className="ml-3 flex w-[154px] items-center justify-between">
        <a href="#ie" aria-label="Internet Explorer"><IeIcon /></a>
        <a href="#firefox" aria-label="Firefox"><FirefoxIcon /></a>
        <a href="#word" aria-label="Word"><DocIcon letter="w" color="#2f62b8" /></a>
        <a href="#excel" aria-label="Excel"><DocIcon letter="X" color="#2d8a3c" /></a>
        <a href="#access" aria-label="Access"><AccessIcon /></a>
        <a href="#ppt" aria-label="PowerPoint"><DocIcon letter="C" color="#d8501c" /></a>
        <a href="#web" aria-label="Web"><GlobeIcon /></a>
      </div>
      <button className="ml-[28px] flex h-[25px] w-[157px] items-center gap-1 rounded-[2px] border border-[#4a96fa] bg-[#2b7cf4] pl-2 whitespace-nowrap">
        <IeIcon />
        Course: BT 165: Intr...
      </button>
      <button className="ml-0.5 flex h-[25px] w-[160px] items-center gap-1 rounded-[2px] border border-[#0a34a0] bg-[#063cc4] pl-2.5 whitespace-nowrap">
        <DocIcon letter="X" color="#2d8a3c" />
        Microsoft Excel - Cop...
      </button>
      <div className="ml-auto flex h-full items-center">
        <button aria-label="Help" className="flex h-[13px] w-3 items-center justify-center bg-[#fffde0] text-[12px] leading-3 font-bold text-black">?</button>
        <button aria-label="Language options" className="mr-4 ml-3 flex w-2.5 flex-col items-center gap-1.5">
          <svg width="9" height="7" viewBox="0 0 9 7" fill="none" stroke="#fff"><path d="M3 .5h5.500l-1 3H6M1.500 2.500H6l-1 3H.5z" /></svg>
          <Caret className="text-white" />
        </button>
        <div className="flex h-full items-center gap-1 border-l border-[#0a58c0] bg-linear-to-b from-[#3cb8ff] via-[#0f94f0] via-20% to-[#0c90ee] pr-3 pl-2.5">
          <svg width="16" height="16" viewBox="0 0 16 16"><circle cx="8" cy="8" r="7" fill="#e6e6dc" stroke="#6f6f66" /><rect x="4" y="5" width="8" height="6" rx="2" fill="#fff" stroke="#6b8a3a" /></svg>
          <svg width="14" height="14" viewBox="0 0 14 14"><rect width="14" height="14" fill="#f2f8ff" /><path d="M3 2l8 9" stroke="#2a66b8" strokeWidth="2" /><circle cx="4" cy="4" r="2" fill="#2a66b8" /></svg>
          <svg width="13" height="15" viewBox="0 0 13 15"><path d="M0 1h4v11H0zM5 1h6v9H5z" fill="#f8e890" stroke="#b09838" strokeWidth=".6" /><circle cx="8.500" cy="11" r="3.500" fill="#2a9c2a" /></svg>
          <svg width="15" height="15" viewBox="0 0 15 15"><circle cx="7.500" cy="7.500" r="7.500" fill="#4fc03c" /><text x="7" y="12" textAnchor="middle" fontSize="12" fontWeight="bold" fontStyle="italic" fill="#fff">A</text></svg>
          <svg width="15" height="15" viewBox="0 0 15 15"><rect width="15" height="15" fill="#25a6c8" /><path d="M4 3.500h7l-7 8h7" fill="none" stroke="#fff" strokeWidth="2" /></svg>
          <svg width="14" height="15" viewBox="0 0 14 15" fill="none"><circle cx="6" cy="6" r="5.500" fill="#8a8a90" stroke="#44444c" /><circle cx="6" cy="6" r="2.500" fill="#222" /><path d="M10 13l3-3" stroke="#d0e8ff" /></svg>
          <svg width="13" height="14" viewBox="0 0 13 14"><path d="M2 14V1l9 12V0" fill="none" stroke="#d8101c" strokeWidth="3" /></svg>
          <time className="ml-1 whitespace-nowrap">12:45 PM</time>
        </div>
      </div>
    </footer>
  );
}

export default function App() {
  return (
    <div className="flex min-h-screen flex-col border-r-4 border-black bg-white font-['Open_Sans',sans-serif]">
      <div className="relative">
        <TitleBar />
        <MenuTabs />
        <button aria-label="Office" className="absolute top-0.5 left-0"><OfficeLogo /></button>
      </div>
      <Ribbon />
      <FormulaBar />
      <div className="flex flex-1 border-r-4 border-[#c4ecfa]">
        <div className="min-w-0 flex-1 bg-[#e6faff] pt-[3px]">
          <div className="h-full border-t border-[#5d90c4] bg-white">
            <Sheet />
          </div>
        </div>
        <VerticalScroll />
      </div>
      <SheetTabs />
      <StatusBar />
      <Taskbar />
    </div>
  );
}
